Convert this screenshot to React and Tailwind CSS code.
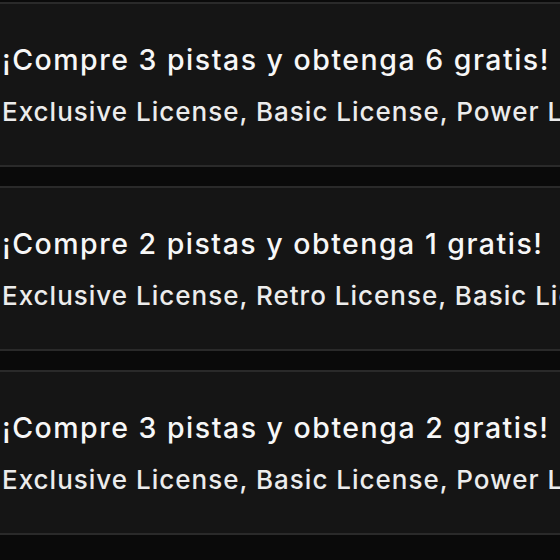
const offers = [
  {
    title: "¡Compre 3 pistas y obtenga 6 gratis!",
    licenses: "Exclusive License, Basic License, Power License, Retro License",
  },
  {
    title: "¡Compre 2 pistas y obtenga 1 gratis!",
    licenses: "Exclusive License, Retro License, Basic License, Power License",
  },
  {
    title: "¡Compre 3 pistas y obtenga 2 gratis!",
    licenses: "Exclusive License, Basic License, Power License, Retro License",
  },
];

export default function App() {
  return (
    <div className="w-[560px] h-[560px] overflow-hidden bg-[#0a0a0a] pt-[2px] flex flex-col gap-[19px] font-['Inter',sans-serif]">
      {offers.map((offer, i) => (
        <div
          key={i}
          className="h-[165px] shrink-0 border-y-2 border-[#2a2a2a] bg-[#151515] flex flex-col justify-center gap-[18px] pl-[2px] whitespace-nowrap overflow-hidden"
        >
          <h2 className="text-[28.5px] leading-[36px] tracking-[1.5px] font-medium text-[#f7f7f7]">
            {offer.title}
          </h2>
          <p className="text-[26px] leading-[32px] tracking-[1px] font-medium text-[#ececec]">
            {offer.licenses}
          </p>
        </div>
      ))}
    </div>
  );
}
